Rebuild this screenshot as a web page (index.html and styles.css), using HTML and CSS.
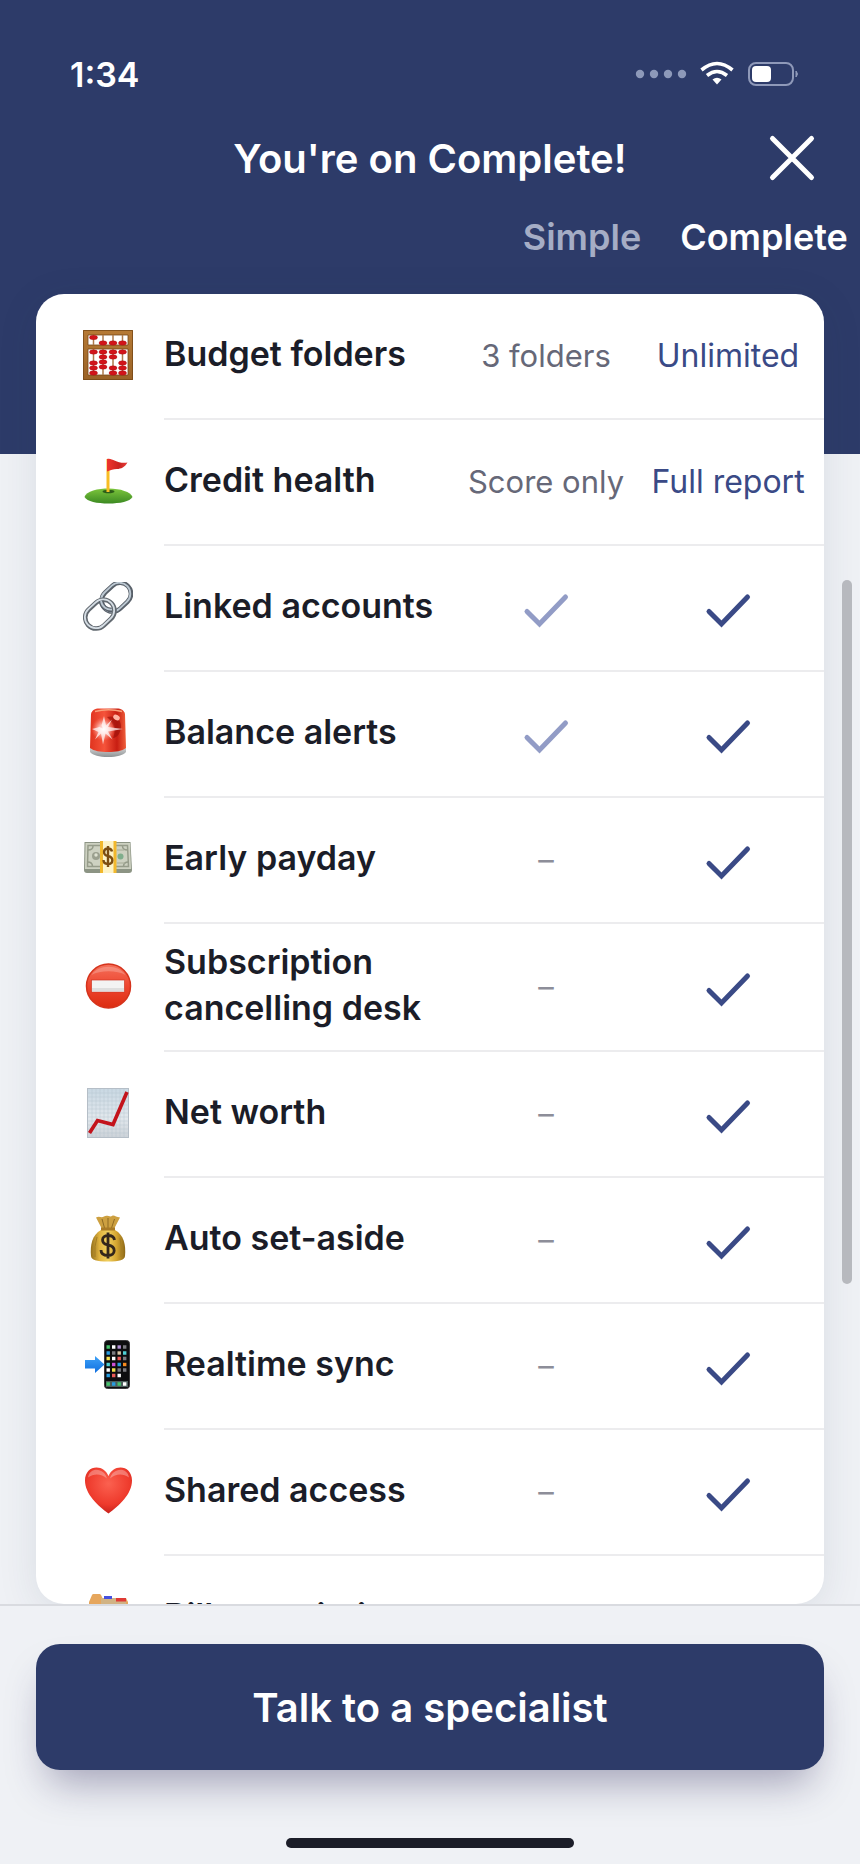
FILE: index.html
```html
<!DOCTYPE html>
<html lang="en">

<head>
    <meta charset="UTF-8">
    <meta name="viewport" content="width=device-width, initial-scale=1.0">
    <title>Your plan</title>
    <link rel="stylesheet" href="styles.css">
</head>

<body>
    <!-- shared shapes -->
    <svg class="defs" width="0" height="0" aria-hidden="true">
        <symbol id="check" viewBox="0 0 48 48">
            <path d="M5 27.5 17.5 40 43.5 13" fill="none" stroke="currentColor" stroke-width="5" stroke-linecap="round" />
        </symbol>
        <defs>
            <linearGradient id="wood" x1="0" y1="0" x2="0" y2="1">
                <stop offset="0" stop-color="#b67a35" />
                <stop offset="1" stop-color="#9a6226" />
            </linearGradient>
            <linearGradient id="grass" x1="0" y1="0" x2="0" y2="1">
                <stop offset="0" stop-color="#7cc53c" />
                <stop offset="1" stop-color="#3c8a22" />
            </linearGradient>
            <linearGradient id="flag" x1="0" y1="0" x2="1" y2="0">
                <stop offset="0" stop-color="#f0342c" />
                <stop offset="0.6" stop-color="#c9221f" />
                <stop offset="1" stop-color="#e8403a" />
            </linearGradient>
            <linearGradient id="siren" x1="0" y1="0" x2="1" y2="0">
                <stop offset="0" stop-color="#e0341f" />
                <stop offset="0.4" stop-color="#f5533a" />
                <stop offset="0.75" stop-color="#c81e12" />
                <stop offset="1" stop-color="#f0603c" />
            </linearGradient>
            <radialGradient id="glow">
                <stop offset="0" stop-color="#fff" />
                <stop offset="0.4" stop-color="#ffd5cf" stop-opacity="0.8" />
                <stop offset="1" stop-color="#ff8a78" stop-opacity="0" />
            </radialGradient>
            <linearGradient id="metal" x1="0" y1="0" x2="0" y2="1">
                <stop offset="0" stop-color="#d8d8d8" />
                <stop offset="1" stop-color="#8d9294" />
            </linearGradient>
            <linearGradient id="red" x1="0" y1="0" x2="0" y2="1">
                <stop offset="0" stop-color="#f4705a" />
                <stop offset="0.5" stop-color="#ee4630" />
                <stop offset="1" stop-color="#dc2c10" />
            </linearGradient>
            <linearGradient id="paper" x1="0" y1="0" x2="0" y2="1">
                <stop offset="0" stop-color="#c9d8e3" />
                <stop offset="0.6" stop-color="#e2e8ed" />
                <stop offset="1" stop-color="#ccd2d8" />
            </linearGradient>
            <linearGradient id="gold" x1="0" y1="0" x2="1" y2="0">
                <stop offset="0" stop-color="#94701c" />
                <stop offset="0.25" stop-color="#dfb23e" />
                <stop offset="0.5" stop-color="#f0cf5e" />
                <stop offset="0.75" stop-color="#d5a530" />
                <stop offset="1" stop-color="#8c6818" />
            </linearGradient>
            <linearGradient id="arrow" x1="0" y1="0" x2="0" y2="1">
                <stop offset="0" stop-color="#3fa2f7" />
                <stop offset="1" stop-color="#0f6fe0" />
            </linearGradient>
            <radialGradient id="heart" cx="0.5" cy="0.35" r="0.65">
                <stop offset="0" stop-color="#fb6150" />
                <stop offset="0.7" stop-color="#ee3a2c" />
                <stop offset="1" stop-color="#c9221c" />
            </radialGradient>
        </defs>
    </svg>

    <header class="header">
        <div class="status">
            <span class="time">1:34</span>
            <svg class="status-icons" width="164" height="28" viewBox="0 0 164 28" aria-hidden="true">
                <g fill="#8d99b9">
                    <circle cx="5" cy="14" r="4.2" />
                    <circle cx="19" cy="14" r="4.2" />
                    <circle cx="33" cy="14" r="4.2" />
                    <circle cx="47" cy="14" r="4.2" />
                </g>
                <g fill="none" stroke="#fff" stroke-width="3.6">
                    <path d="M66.5 10Q82 -3 97.5 10" />
                    <path d="M72 15.5Q82 7.5 92 15.5" />
                </g>
                <path d="M77.5 19.5Q82 16 86.5 19.5L82 24.500z" fill="#fff" />
                <rect x="114" y="3" width="44" height="22" rx="7" fill="none" stroke="#8f99b9" stroke-width="2" />
                <rect x="117" y="6" width="19" height="16" rx="4" fill="#fff" />
                <path d="M161 11q3 3 0 6z" fill="#8f99b9" stroke="#8f99b9" />
            </svg>
        </div>
        <div class="title-bar">
            <h1>You're on Complete!</h1>
            <button class="close" type="button" aria-label="Close">
                <svg width="52" height="52" viewBox="0 0 52 52" aria-hidden="true">
                    <path d="M6.5 6.5 45.5 45.5M45.5 6.5 6.5 45.5" stroke="#fff" stroke-width="5" stroke-linecap="round" />
                </svg>
            </button>
        </div>
        <div class="plans">
            <span class="plan plan-simple">Simple</span>
            <span class="plan">Complete</span>
        </div>
    </header>

    <main class="card">
        <table class="features">
            <colgroup>
                <col class="col-icon">
                <col>
                <col class="col-plan">
                <col class="col-last">
            </colgroup>
            <tbody>
                <tr>
                    <td class="icon">
                        <svg viewBox="0 0 50 50" aria-hidden="true">
                            <path fill="url(#wood)" fill-rule="evenodd" d="M0 0h50v50H0zM5 5v10h40V5zM5 19v26h40V19z" />
                            <path d="M.5 .5h49v49H.5zM5 5h40v10H5zM5 19h40v26H5z" fill="none" stroke="#764716" stroke-width=".8" />
                            <path d="M10.5 5v10M20 5v10M30 5v10M39.5 5v10M10.5 19v26M20 19v26M30 19v26M39.5 19v26" stroke="#ae7b4c" stroke-width="1.5" />
                            <g fill="#d2141a" stroke="#a31015" stroke-width=".4">
                                <ellipse cx="10.5" cy="7.5" rx="4" ry="2.2" />
                                <ellipse cx="20" cy="13" rx="4" ry="2.2" />
                                <ellipse cx="30" cy="13" rx="4" ry="2.2" />
                                <ellipse cx="39.5" cy="13" rx="4" ry="2.2" />
                                <ellipse cx="10.5" cy="22" rx="4" ry="2.2" />
                                <ellipse cx="20" cy="22" rx="4" ry="2.2" />
                                <ellipse cx="30" cy="22" rx="4" ry="2.2" />
                                <ellipse cx="39.5" cy="22" rx="4" ry="2.2" />
                                <ellipse cx="20" cy="27" rx="4" ry="2.2" />
                                <ellipse cx="30" cy="27" rx="4" ry="2.2" />
                                <ellipse cx="10.5" cy="33" rx="4" ry="2.2" />
                                <ellipse cx="20" cy="32" rx="4" ry="2.2" />
                                <ellipse cx="39.5" cy="33" rx="4" ry="2.2" />
                                <ellipse cx="10.5" cy="38" rx="4" ry="2.2" />
                                <ellipse cx="20" cy="37" rx="4" ry="2.2" />
                                <ellipse cx="30" cy="38" rx="4" ry="2.2" />
                                <ellipse cx="39.5" cy="38" rx="4" ry="2.2" />
                                <ellipse cx="10.5" cy="43" rx="4" ry="2.2" />
                                <ellipse cx="30" cy="43" rx="4" ry="2.2" />
                                <ellipse cx="39.5" cy="43" rx="4" ry="2.2" />
                            </g>
                        </svg>
                    </td>
                    <th scope="row">Budget folders</th>
                    <td class="simple">3 folders</td>
                    <td class="complete">Unlimited</td>
                </tr>
                <tr>
                    <td class="icon">
                        <svg viewBox="0 0 50 50" aria-hidden="true">
                            <path d="M1.5 41C3 35 15 32.5 26 32.5S48 36 49.5 41C47 45.5 37 47.5 25.5 47.5S4 45.5 1.5 41z" fill="url(#grass)" />
                            <ellipse cx="25.5" cy="35.5" rx="6" ry="1.8" fill="#2c5d18" />
                            <path d="M23.5 3h3v33h-3z" fill="#f8bd24" />
                            <path d="M24 3C29 1 33 8 44.5 6.5 42 11 38 13 34 13S28 14 24 15.500z" fill="url(#flag)" />
                        </svg>
                    </td>
                    <th scope="row">Credit health</th>
                    <td class="simple">Score only</td>
                    <td class="complete">Full report</td>
                </tr>
                <tr>
                    <td class="icon">
                        <svg viewBox="0 0 50 50" fill="none" aria-hidden="true">
                            <g transform="rotate(-43 33 15.5)">
                                <rect x="17.5" y="4.5" width="32" height="22" rx="11" stroke="#59616a" stroke-width="4.6" />
                                <rect x="17" y="4" width="32" height="22" rx="11" stroke="#bcc8d2" stroke-width="1.8" />
                            </g>
                            <g transform="rotate(-43 16.5 32.5)">
                                <rect x="1" y="21.5" width="32" height="22" rx="11" stroke="#626970" stroke-width="4.6" />
                                <rect x="1" y="21" width="32" height="22" rx="11" stroke="#d5dde4" stroke-width="1.8" />
                            </g>
                            <path d="M18 19C19 25 24 28 29 28" stroke="#59616a" stroke-width="4.6" />
                            <path d="M18 19C19 25 24 28 29 27.5" stroke="#bcc8d2" stroke-width="1.8" />
                        </svg>
                    </td>
                    <th scope="row">Linked accounts</th>
                    <td class="simple"><svg class="check" role="img" aria-label="Included"><use href="#check" /></svg></td>
                    <td class="complete"><svg class="check" role="img" aria-label="Included"><use href="#check" /></svg></td>
                </tr>
                <tr>
                    <td class="icon">
                        <svg viewBox="0 0 50 50" aria-hidden="true">
                            <path d="M7 39h36v5c-3 3.5-9 5-18 5s-15-1.5-18-5z" fill="url(#metal)" />
                            <path d="M8 6C9 2 12 .5 16 .5h18c4 0 7 1.5 8 5.5l1 34c-4 3-10 4-18 4S11 43 7 40z" fill="url(#siren)" />
                            <path d="M12 3.5C20 1.5 31 1.5 39 3.5" fill="none" stroke="#f9a17c" stroke-width="1.5" />
                            <path d="M24 9c7-2 14 2 14 9s-4 12-8 12c3-6 2-14-6-21z" fill="#991009" opacity=".65" />
                            <ellipse cx="33.5" cy="9.5" rx="3.5" ry="2.5" fill="#ffb4a4" transform="rotate(30 33.5 9.5)" />
                            <circle cx="20.5" cy="21" r="12" fill="url(#glow)" />
                            <path d="M20.5 21 14 9l4.5 8.5L21 8l2 9.5 6-6-4 7.5 15 2-15 2.5 4.5 8-7-6-2.5 11-2-11-6 6 3.5-7.5L9 21l7.5-2z" fill="#fff" opacity=".7" />
                        </svg>
                    </td>
                    <th scope="row">Balance alerts</th>
                    <td class="simple"><svg class="check" role="img" aria-label="Included"><use href="#check" /></svg></td>
                    <td class="complete"><svg class="check" role="img" aria-label="Included"><use href="#check" /></svg></td>
                </tr>
                <tr>
                    <td class="icon">
                        <svg viewBox="0 0 50 50" aria-hidden="true">
                            <path d="M1.5 8h46L49 36q0 3-3 3H4q-3 0-3-3z" fill="#8c9484" />
                            <path d="M2.5 9h44.500l1 26H2z" fill="#cdd1c1" />
                            <path d="M5 11.5h39.500l1 21H4.500z" fill="none" stroke="#969c8a" stroke-width="1.5" />
                            <path d="M5 16q5 0 5-4M4.5 28q5 0 5 4.5M44.5 16q-5 0-5-4M45.5 28q-5 0-5 4.5" fill="none" stroke="#969c8a" stroke-width="1.5" />
                            <circle cx="13" cy="22" r="4" fill="#9ba08f" />
                            <circle cx="13" cy="21" r="1.7" fill="#dfe2d2" />
                            <circle cx="37.5" cy="22.5" r="3" fill="#7fae8c" />
                            <path d="M34 16h7M34 29h8" stroke="#a6ab97" />
                            <path d="M17.5 7h15l.5 32H17z" fill="#fdf3c7" />
                            <path d="M17 7h3v32h-3zM30.5 7h3v32h-3z" fill="#f2b82c" />
                            <path d="M29 17.5C28.5 15 27 14.5 25 14.5c-5 0-5.500 6.500 0 7.500 6 1.200 5.500 8 0 8-3 0-4.500-1.500-4.500-4M25 12v21" fill="none" stroke="#7b4d12" stroke-width="2.4" />
                        </svg>
                    </td>
                    <th scope="row">Early payday</th>
                    <td class="simple dash">–</td>
                    <td class="complete"><svg class="check" role="img" aria-label="Included"><use href="#check" /></svg></td>
                </tr>
                <tr>
                    <td class="icon">
                        <svg viewBox="0 0 50 50" aria-hidden="true">
                            <circle cx="25.5" cy="25" r="22" fill="url(#red)" stroke="#d5331c" stroke-width="1.5" />
                            <path d="M8.5 14C15 3 36 3 42.5 14 34 9 17 9 8.5 14z" fill="#fff" opacity=".22" />
                            <rect x="8.5" y="19" width="33" height="12" fill="#f3f3f3" stroke="#cf3826" stroke-width=".7" />
                            <path d="M9 27h32v3.500H9z" fill="#dedede" />
                        </svg>
                    </td>
                    <th scope="row">Subscription cancelling desk</th>
                    <td class="simple dash">–</td>
                    <td class="complete"><svg class="check" role="img" aria-label="Included"><use href="#check" /></svg></td>
                </tr>
                <tr>
                    <td class="icon">
                        <svg viewBox="0 0 50 50" aria-hidden="true">
                            <rect x="4.5" y=".5" width="41" height="49" fill="url(#paper)" stroke="#b5bec7" />
                            <path d="M9 1v48M13 1v48M17 1v48M21 1v48M25 1v48M29 1v48M33 1v48M37 1v48M41 1v48M5 5h40M5 9h40M5 13h40M5 17h40M5 21h40M5 25h40M5 29h40M5 33h40M5 37h40M5 41h40M5 45h40" stroke="#b3c0cb" stroke-width=".4" />
                            <path d="M6.5 45 14.5 32.5 30 36.5 44 4" fill="none" stroke="#c3131b" stroke-width="3.6" />
                        </svg>
                    </td>
                    <th scope="row">Net worth</th>
                    <td class="simple dash">–</td>
                    <td class="complete"><svg class="check" role="img" aria-label="Included"><use href="#check" /></svg></td>
                </tr>
                <tr>
                    <td class="icon">
                        <svg viewBox="0 0 50 50" aria-hidden="true">
                            <path d="M18 16C9 21 7 31 8 42c.5 4 5 5.500 17 5.500S41.5 46 42 42c1-11-1-21-10-26z" fill="url(#gold)" />
                            <path d="M18.5 14 13 3.5c4-2 5 1 8-1s6 1 8-.5 4 1.500 8 1.500L31.5 14z" fill="#cda040" />
                            <path d="M19 5l2.5 9M25 4v10M31.5 5 28.5 14" stroke="#8f6b22" />
                            <path d="M18 13.5h14v3H18z" fill="#a97a25" />
                            <path d="M14 23q-3 9-2 20M37 24q2 9 1 19" stroke="#a37d24" fill="none" />
                            <path d="M31.5 26C31 22.5 28.5 21.5 25 21.5c-7 0-7.500 8 0 9.500 8.500 1.500 8 10.500 0 10.500-4.500 0-7-2-7-5.500M25 18.5v26" fill="none" stroke="#33261b" stroke-width="2.8" />
                        </svg>
                    </td>
                    <th scope="row">Auto set-aside</th>
                    <td class="simple dash">–</td>
                    <td class="complete"><svg class="check" role="img" aria-label="Included"><use href="#check" /></svg></td>
                </tr>
                <tr>
                    <td class="icon">
                        <svg viewBox="0 0 50 50" aria-hidden="true">
                            <rect x="21.5" y=".5" width="25" height="48" rx="3" fill="#0d0d0f" stroke="#3b3b3d" />
                            <path d="M2 20h10v-4l9.500 8.500L12 33v-4.500H2z" fill="url(#arrow)" />
                            <path d="M23 41h22v6H23z" fill="#4b5d5b" />
                            <g stroke-width="3.4">
                                <path stroke="#45c26b" d="M23.5 7h3.400M34.5 44h3.400M23.5 44h3.400" />
                                <path stroke="#fff" d="M29 7h3.400M29 18.500h3.400M23.5 30h3.400M34.5 35.500h3.400M40 44h3.400" />
                                <path stroke="#b491d8" d="M34.5 7h3.400" />
                                <path stroke="#7b7b80" d="M40 7h3.400M29 13h3.400M40 18.500h3.400M34.5 30h3.400M40 30h3.400" />
                                <path stroke="#279ce0" d="M23.5 13h3.400M34.5 24.500h3.400M23.5 35.500h3.400M29 44h3.400" />
                                <path stroke="#d8c6a8" d="M34.5 13h3.400" />
                                <path stroke="#4dd0d5" d="M40 13h3.400M23.5 24.500h3.400" />
                                <path stroke="#f4e04b" d="M23.5 18.500h3.400M29 30h3.400" />
                                <path stroke="#ea5a56" d="M34.5 18.500h3.400M29 35.500h3.400" />
                                <path stroke="#cc4fd6" d="M29 24.500h3.400" />
                                <path stroke="#f58a1e" d="M40 24.500h3.400" />
                            </g>
                        </svg>
                    </td>
                    <th scope="row">Realtime sync</th>
                    <td class="simple dash">–</td>
                    <td class="complete"><svg class="check" role="img" aria-label="Included"><use href="#check" /></svg></td>
                </tr>
                <tr>
                    <td class="icon">
                        <svg viewBox="0 0 50 50" aria-hidden="true">
                            <path d="M25.5 47.5C15 40 2 28 2 14.5 2 6 7.5 1.5 13.5 1.5c5.500 0 9.500 3 12 8.500 2.500-5.500 6.500-8.500 12-8.500 6 0 11.500 4.500 11.500 13C49 28 36 40 25.5 47.500z" fill="url(#heart)" />
                            <path d="M5 11.5C6 5 12 2.5 17 4.500s6 5 7 8c-6-5-13-5-19-1zM46 11.5C45 5 39 2.500 34 4.500s-6 5-7 8c6-5 13-5 19-1z" fill="#fff" opacity=".3" />
                        </svg>
                    </td>
                    <th scope="row">Shared access</th>
                    <td class="simple dash">–</td>
                    <td class="complete"><svg class="check" role="img" aria-label="Included"><use href="#check" /></svg></td>
                </tr>
                <tr>
                    <td class="icon">
                        <svg viewBox="0 0 50 50" aria-hidden="true">
                            <path d="M6 10l3-7q.5-1 1.500-1h6q1 0 1.500 1l1.500 3H43l2 4v34H6z" fill="#e6a65c" />
                            <path d="M18 6h25v6H18z" fill="#d1b384" />
                            <path d="M21 4h8v3h-8z" fill="#4450e0" />
                            <path d="M33 6h10v3.500H33z" fill="#df3a35" />
                            <path d="M3 16h44v32H3z" fill="#e9bd78" />
                        </svg>
                    </td>
                    <th scope="row">Bill negotiation</th>
                    <td class="simple dash">–</td>
                    <td class="complete"><svg class="check" role="img" aria-label="Included"><use href="#check" /></svg></td>
                </tr>
            </tbody>
        </table>
    </main>

    <div class="scrollbar"></div>

    <footer class="footer">
        <button class="cta" type="button">Talk to a specialist</button>
        <div class="home-bar"></div>
    </footer>
</body>

</html>
```

FILE: styles.css
```css
* {
    box-sizing: border-box;
}

body {
    margin: 0;
    height: 100vh;
    display: flex;
    flex-direction: column;
    position: relative;
    overflow: hidden;
    font-family: Inter, "Liberation Sans", sans-serif;
    background-color: #eff1f5;
    color: #1b1d28;
}

button {
    border: 0;
    font-family: inherit;
    cursor: pointer;
}

.defs {
    position: absolute;
}

/* header runs on behind the top of the card */
.header {
    flex-shrink: 0;
    padding: 52px 0 192px;
    background-color: #2d3b69;
    color: #fff;
}

.status {
    display: flex;
    align-items: center;
    justify-content: space-between;
    height: 44px;
    padding: 0 61px 0 70px;
}

.time {
    font-size: 34px;
    font-weight: 600;
}

.title-bar {
    display: grid;
    grid-template-columns: 1fr auto 1fr;
    align-items: center;
    height: 80px;
    margin-top: 22px;
    padding: 0 42px;
}

.title-bar h1 {
    grid-column: 2;
    margin: 0;
    font-size: 40px;
    font-weight: 600;
}

.close {
    justify-self: end;
    padding: 0;
    background: none;
}

.close svg {
    display: block;
}

.plans {
    display: flex;
    justify-content: flex-end;
    height: 64px;
    padding-right: 5px;
}

.plan {
    width: 182px;
    font-size: 36px;
    font-weight: 600;
    line-height: 78px;
    text-align: center;
}

.plan-simple {
    color: #a5adc5;
}

.card {
    flex: 1;
    min-height: 0;
    margin: -160px 36px 0;
    overflow: hidden;
    border-radius: 28px;
    background-color: #fff;
    box-shadow: 0 8px 40px rgba(40, 60, 80, 0.1);
}

.features {
    width: 100%;
    table-layout: fixed;
    border-spacing: 0;
}

.col-icon {
    width: 128px;
}

.col-plan {
    width: 182px;
}

.col-last {
    width: 187px;
}

.features th,
.features td {
    height: 126px;
    padding: 17px 0;
    border-bottom: 2px solid #ececee;
    font-size: 32px;
    line-height: 46px;
    text-align: center;
    white-space: nowrap;
}

.features th {
    padding: 15px 0 19px;
    font-size: 34px;
    font-weight: 600;
    text-align: left;
    white-space: normal;
}

.features .icon {
    padding: 15px 0 19px 47px;
    border-bottom: 0;
    text-align: left;
}

.icon svg {
    display: block;
    width: 50px;
    height: 50px;
}

.features .simple {
    color: #666878;
    font-size: 31px;
}

.features .complete {
    padding-right: 5px;
    color: #3a4a86;
}

.features .dash {
    color: #8d8e99;
}

.check {
    display: block;
    width: 48px;
    height: 48px;
    margin: 0 auto;
}

.simple .check {
    color: #929cc6;
}

.scrollbar {
    position: absolute;
    top: 580px;
    right: 8px;
    width: 10px;
    height: 704px;
    border-radius: 5px;
    background-color: #b7b9be;
}

.footer {
    position: relative;
    flex-shrink: 0;
    padding: 38px 36px 16px;
    border-top: 2px solid #d9dbe0;
    background-color: #eff1f5;
}

.cta {
    display: block;
    width: 100%;
    height: 126px;
    border-radius: 24px;
    background-color: #2d3b69;
    color: #fff;
    font-size: 40px;
    font-weight: 600;
    box-shadow: 0 24px 40px -12px rgba(45, 40, 90, 0.4);
}

.home-bar {
    width: 288px;
    height: 10px;
    margin: 68px auto 0;
    border-radius: 5px;
    background-color: #1b1d28;
}
```
